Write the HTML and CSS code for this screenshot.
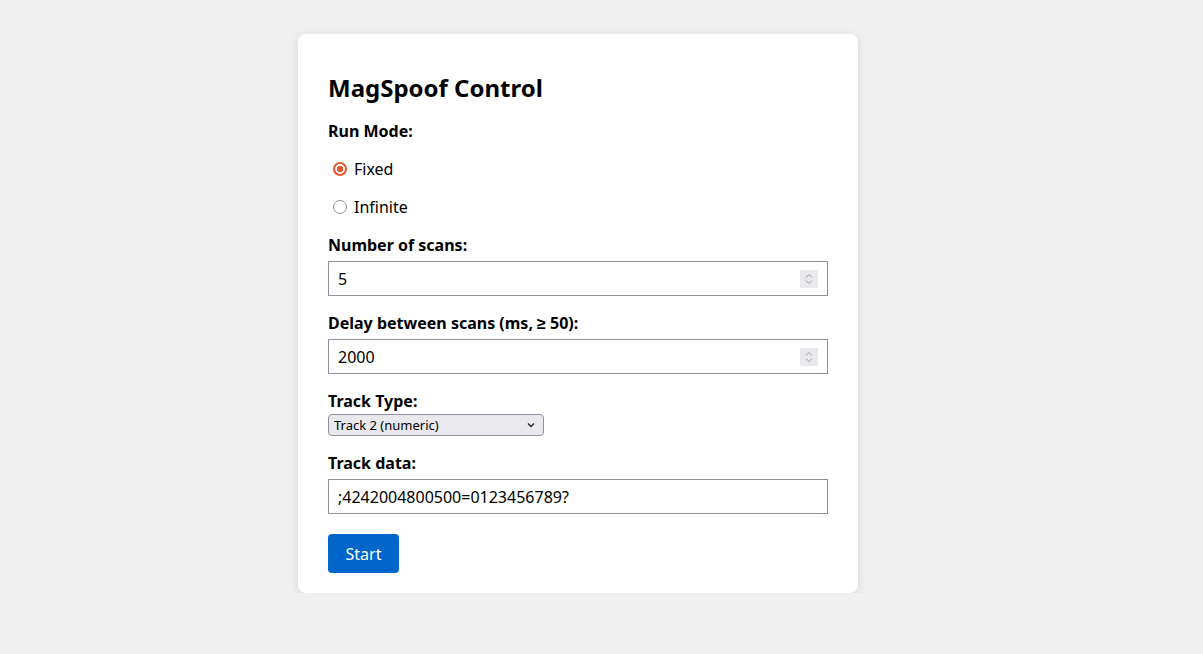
FILE: index.html
```html
<!DOCTYPE html>
<html lang="en">
<head>
<meta charset="utf-8">
<title>MagSpoof Control</title>
<link rel="stylesheet" href="styles.css">
</head>
<body>
<main class="card">
  <h2 class="title">MagSpoof Control</h2>
  <div class="field-label">Run Mode:</div>
  <label class="radio-row"><input class="radio" type="radio" name="mode" value="fixed" checked> Fixed</label>
  <label class="radio-row"><input class="radio" type="radio" name="mode" value="infinite"> Infinite</label>
  <label class="field-label" for="count">Number of scans:</label>
  <div class="number-box">
    <input class="number-input" id="count" type="number" value="5">
    <span class="spinner">
      <svg width="8" height="12" viewBox="0 0 8 12"><path d="M1 4.5 L4 1.5 L7 4.5 M1 7.5 L4 10.5 L7 7.5" fill="none" stroke="#9a9aa2" stroke-width="1"/></svg>
    </span>
  </div>
  <label class="field-label" for="delay">Delay between scans (ms, ≥ 50):</label>
  <div class="number-box">
    <input class="number-input" id="delay" type="number" value="2000">
    <span class="spinner">
      <svg width="8" height="12" viewBox="0 0 8 12"><path d="M1 4.5 L4 1.5 L7 4.5 M1 7.5 L4 10.5 L7 7.5" fill="none" stroke="#9a9aa2" stroke-width="1"/></svg>
    </span>
  </div>
  <label class="field-label" for="track">Track Type:</label>
  <div class="select-wrap">
    <select class="track-select" id="track">
      <option>Track 2 (numeric)</option>
      <option>Track 1 (alphanumeric)</option>
    </select>
    <svg class="select-arrow" width="8" height="6" viewBox="0 0 8 6"><path d="M1 1.5 L4 4.5 L7 1.5" fill="none" stroke="#222" stroke-width="1.4"/></svg>
  </div>
  <label class="field-label" for="data">Track data:</label>
  <input class="text-input" id="data" type="text" value=";4242004800500=0123456789?">
  <button class="start-btn" type="button">Start</button>
</main>
</body>
</html>
```
FILE: styles.css
```css
html, body {
  margin: 0;
  padding: 0;
}
body {
  background: #f0f0f0;
  font-family: "Noto Sans", sans-serif;
  color: #000;
  padding: 34px 47px 0 0;
}
.card {
  box-sizing: border-box;
  width: 560px;
  margin: 0 auto;
  background: #fff;
  border-radius: 8px;
  box-shadow: 0 2px 8px rgba(0,0,0,0.12);
  padding: 20px 30px 20px;
}
.title {
  font-size: 24px;
  font-weight: 700;
  margin: 17px 0 0;
  line-height: 33px;
}
.field-label {
  display: block;
  font-weight: 700;
  font-size: 16px;
  line-height: 22px;
  margin-top: 16px;
}
.radio-row {
  display: flex;
  align-items: center;
  font-size: 16px;
  line-height: 22px;
  margin-top: 16px;
}
.radio {
  appearance: none;
  -webkit-appearance: none;
  box-sizing: border-box;
  width: 14px;
  height: 14px;
  margin: 0 7px 0 5px;
  border: 1px solid #8f8f9d;
  border-radius: 50%;
  background: #fff;
}
.radio:checked {
  border: 2px solid #e8552a;
  background: radial-gradient(circle, #e8552a 0 3px, #fff 3.5px);
}
.number-box {
  display: flex;
  align-items: center;
  box-sizing: border-box;
  height: 35px;
  margin-top: 5px;
  border: 1px solid #8f8f9d;
  padding: 0 9px;
}
.number-input {
  flex: 1;
  min-width: 0;
  border: none;
  outline: none;
  padding: 0;
  font-family: "Noto Sans", sans-serif;
  font-size: 16px;
  -moz-appearance: textfield;
}
.number-input::-webkit-inner-spin-button,
.number-input::-webkit-outer-spin-button {
  -webkit-appearance: none;
  margin: 0;
}
.spinner {
  display: flex;
  align-items: center;
  justify-content: center;
  width: 18px;
  height: 18px;
  background: #e9e9ed;
}
.text-input {
  display: block;
  box-sizing: border-box;
  width: 100%;
  height: 35px;
  margin-top: 5px;
  padding: 6px 9px;
  font-family: "Noto Sans", sans-serif;
  font-size: 16px;
  border: 1px solid #8f8f9d;
  border-radius: 0;
  outline: none;
}
.select-wrap {
  position: relative;
  width: 216px;
  margin-top: 2px;
}
.track-select {
  appearance: none;
  -webkit-appearance: none;
  display: block;
  box-sizing: border-box;
  width: 216px;
  height: 22px;
  padding: 0 20px 0 5px;
  background: #e9e9ed;
  border: 1px solid #8f8f9d;
  border-radius: 4px;
  color: #000;
  font-family: "Noto Sans", sans-serif;
  font-size: 13px;
}
.select-arrow {
  position: absolute;
  right: 9px;
  top: 8px;
  pointer-events: none;
}
.start-btn {
  display: block;
  margin-top: 20px;
  width: 71px;
  height: 39px;
  background: #0066cc;
  color: #fff;
  border: none;
  border-radius: 4px;
  font-family: "Noto Sans", sans-serif;
  font-size: 16px;
}
```
